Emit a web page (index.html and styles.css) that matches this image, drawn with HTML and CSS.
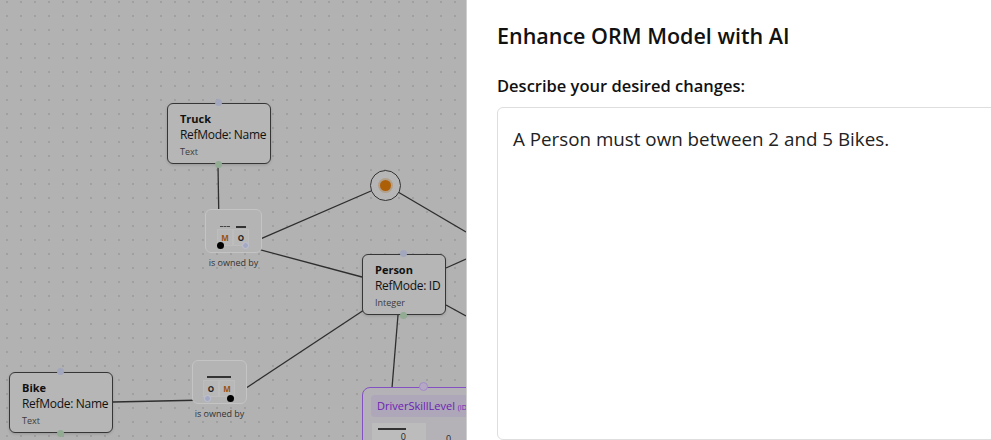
FILE: index.html
```html
<!DOCTYPE html>
<html lang="en">
<head>
    <meta charset="UTF-8">
    <meta name="viewport" content="width=device-width, initial-scale=1.0">
    <title>ORM Modeler</title>
    <link rel="stylesheet" href="styles.css">
</head>
<body>
    <div class="app">
        <div class="canvas">
            <svg class="links" width="466" height="440" viewBox="0 0 466 440">
                <line x1="218" y1="165" x2="219" y2="228" />
                <line x1="249" y1="244" x2="371" y2="191" />
                <line x1="246" y1="246" x2="362" y2="277" />
                <line x1="398" y1="192" x2="466" y2="232" />
                <line x1="446" y1="268" x2="466" y2="259" />
                <line x1="446" y1="305" x2="466" y2="316" />
                <line x1="398" y1="315" x2="392" y2="388" />
                <line x1="364" y1="310" x2="231" y2="398" />
                <line x1="113" y1="402" x2="207" y2="400" />
            </svg>

            <div class="entity entity-truck">
                <div class="entity-name">Truck</div>
                <div class="entity-ref">RefMode: Name</div>
                <div class="entity-type">Text</div>
                <span class="port port-top"></span>
                <span class="port port-bottom"></span>
            </div>

            <div class="entity entity-person">
                <div class="entity-name">Person</div>
                <div class="entity-ref">RefMode: ID</div>
                <div class="entity-type">Integer</div>
                <span class="port port-top"></span>
                <span class="port port-bottom"></span>
            </div>

            <div class="entity entity-bike">
                <div class="entity-name">Bike</div>
                <div class="entity-ref">RefMode: Name</div>
                <div class="entity-type">Text</div>
                <span class="port port-top"></span>
                <span class="port port-bottom"></span>
            </div>

            <div class="fact fact-truck">
                <div class="roles">
                    <div class="role"><span class="bar bar-dashed"></span><span class="mult mult-m">M</span></div>
                    <div class="role"><span class="bar"></span><span class="mult">O</span></div>
                </div>
                <span class="dot dot-mandatory dot-a"></span>
                <span class="dot dot-link dot-b"></span>
                <div class="fact-label">is owned by</div>
            </div>

            <div class="fact fact-bike">
                <div class="roles">
                    <span class="bar bar-wide"></span>
                    <div class="role"><span class="mult">O</span></div>
                    <div class="role"><span class="mult mult-m">M</span></div>
                </div>
                <span class="dot dot-link dot-c"></span>
                <span class="dot dot-mandatory dot-d"></span>
                <div class="fact-label">is owned by</div>
            </div>

            <div class="constraint">
                <span class="constraint-dot"></span>
            </div>

            <div class="value-type">
                <span class="value-port"></span>
                <div class="value-head">DriverSkillLevel <small>(ID)</small></div>
                <div class="value-roles">
                    <div class="value-role"><span class="bar bar-value"></span><span class="zero">0</span></div>
                    <span class="zero">0</span>
                </div>
            </div>
        </div>

        <div class="panel">
            <h2 class="panel-title">Enhance ORM Model with AI</h2>
            <label class="field-label" for="changes">Describe your desired changes:</label>
            <textarea class="field" id="changes">A Person must own between 2 and 5 Bikes.</textarea>
        </div>
    </div>
</body>
</html>
```

FILE: styles.css
```css
body {
    margin: 0;
    font-family: 'Open Sans', 'Noto Sans', sans-serif;
    color: #111;
    overflow: hidden;
}

.app {
    display: flex;
    width: 991px;
    height: 440px;
}

/* diagram canvas, dimmed behind the side panel */
.canvas {
    position: relative;
    width: 466px;
    flex-shrink: 0;
    height: 100%;
    overflow: hidden;
    background-color: #b2b2b2;
    background-image: radial-gradient(circle, #9a9a9a 0.6px, transparent 1px);
    background-size: 14px 14px;
    background-position: 0 -5px;
}

.links {
    position: absolute;
    left: 0;
    top: 0;
}

.links line {
    stroke: #2e2e2e;
    stroke-width: 1.3;
}

.entity {
    position: absolute;
    box-sizing: border-box;
    height: 61px;
    padding: 7px 0 0 12px;
    border: 1.5px solid #363636;
    border-radius: 6px;
    background: #b6b6b6;
    box-shadow: 0 1px 3px rgba(0, 0, 0, 0.15);
    white-space: nowrap;
}

.entity-truck { left: 167px; top: 103px; width: 104px; }
.entity-person { left: 362px; top: 254px; width: 84px; }
.entity-bike { left: 9px; top: 372px; width: 104px; }

.entity-name {
    font-size: 11px;
    font-weight: 700;
    line-height: 15px;
}

.entity-ref {
    font-size: 12px;
    line-height: 17px;
    letter-spacing: -0.3px;
}

.entity-type {
    margin-top: 2px;
    font-size: 9px;
    line-height: 13px;
    color: #3c3c3c;
}

.port {
    position: absolute;
    left: 50%;
    width: 7px;
    height: 7px;
    margin-left: -4px;
    border-radius: 50%;
}

.port-top {
    top: -5px;
    background: #a2a7bd;
}

.port-bottom {
    bottom: -5px;
    background: #92ab93;
}

/* fact types */
.fact {
    position: absolute;
    box-sizing: border-box;
    border: 1.5px solid #c4c4c4;
    border-radius: 6px;
    background: #b4b4b4;
}

.fact-truck { left: 205px; top: 209px; width: 57px; height: 44px; }
.fact-bike { left: 192px; top: 360px; width: 55px; height: 44px; }

.roles {
    position: absolute;
    display: flex;
}

.fact-truck .roles { left: 11px; top: 19px; }
.fact-bike .roles { left: 10px; top: 19px; }

.role {
    position: relative;
    box-sizing: border-box;
    width: 16px;
    height: 17px;
    border: 1px solid #bdbdbd;
    background: #b8b8b8;
    display: flex;
    justify-content: center;
    align-items: center;
}

.mult {
    font-size: 8px;
    font-weight: 700;
    color: #1e1e1e;
}

.mult-m {
    color: #9a5212;
}

.bar {
    position: absolute;
    top: -4px;
    left: 2px;
    right: 2px;
    height: 0;
    border-top: 2px solid #333;
}

.bar-dashed {
    border-top: 1.5px dashed #444;
}

.bar-wide {
    top: -4px;
    left: 4px;
    right: 4px;
    z-index: 1;
}

.dot {
    position: absolute;
    width: 7px;
    height: 7px;
    border-radius: 50%;
}

.dot-mandatory { background: #000; }

.dot-link {
    background: #a4a9c2;
    box-sizing: border-box;
    border: 1px solid #c0c3d6;
}

.dot-a { left: 11px; top: 32px; }
.dot-b { left: 36px; top: 32px; }
.dot-c { left: 11px; top: 34px; }
.dot-d { left: 34px; top: 34px; }

.fact-label {
    position: absolute;
    left: -20px;
    right: -20px;
    top: 100%;
    margin-top: 4px;
    text-align: center;
    font-size: 9px;
    color: #333;
    white-space: nowrap;
}

/* exclusion / frequency constraint */
.constraint {
    position: absolute;
    left: 370px;
    top: 170px;
    box-sizing: border-box;
    width: 31px;
    height: 31px;
    border: 1.5px solid #333;
    border-radius: 50%;
    background: #b6b6b6;
    display: flex;
    justify-content: center;
    align-items: center;
}

.constraint-dot {
    width: 11px;
    height: 11px;
    border-radius: 50%;
    background: #ad5f08;
    box-shadow: 0 0 0 2px rgba(173, 95, 8, 0.25);
}

/* value type, partly cut off at the panel edge */
.value-type {
    position: absolute;
    left: 362px;
    top: 387px;
    width: 140px;
    height: 80px;
    box-sizing: border-box;
    border: 1.5px solid #8451c4;
    border-radius: 8px;
    background: #b4b2b7;
}

.value-port {
    position: absolute;
    left: 56px;
    top: -6px;
    width: 9px;
    height: 9px;
    box-sizing: border-box;
    border-radius: 50%;
    border: 1px solid #a48cc5;
    background: #b4a8c4;
}

.value-head {
    margin: 7px 0 0 8px;
    height: 22px;
    padding-left: 6px;
    border-radius: 4px;
    background: #aea6b9;
    color: #6b22b3;
    font-size: 11px;
    line-height: 22px;
    white-space: nowrap;
}

.value-head small {
    font-size: 7px;
}

.value-roles {
    display: flex;
    gap: 20px;
    margin: 6px 0 0 9px;
}

.value-role {
    position: relative;
    width: 54px;
    height: 20px;
    background: #bcbcbc;
    display: flex;
    justify-content: flex-end;
    align-items: flex-end;
    padding-right: 20px;
    box-sizing: border-box;
}

.bar-value {
    top: 5px;
    left: 6px;
    right: 20px;
}

.zero {
    font-size: 9px;
    line-height: 12px;
    color: #222;
    align-self: flex-end;
    margin-top: 10px;
}

/* side panel */
.panel {
    flex: 1;
    min-width: 0;
    box-sizing: border-box;
    border-left: 1px solid #cfcfcf;
    background: #fff;
    padding: 22px 0 0 30px;
    display: flex;
    flex-direction: column;
}

.panel-title {
    margin: 0;
    font-size: 21.5px;
    font-weight: 600;
    line-height: 28px;
    color: #111;
}

.field-label {
    margin-top: 26px;
    font-size: 16.5px;
    font-weight: 600;
    line-height: 20px;
    color: #111;
}

.field {
    margin-top: 11px;
    width: 520px;
    height: 360px;
    box-sizing: border-box;
    padding: 18px 15px;
    border: 1px solid #dedede;
    border-radius: 6px;
    font-family: inherit;
    font-size: 18.8px;
    line-height: 26px;
    color: #222;
    resize: none;
    outline: none;
}
```
